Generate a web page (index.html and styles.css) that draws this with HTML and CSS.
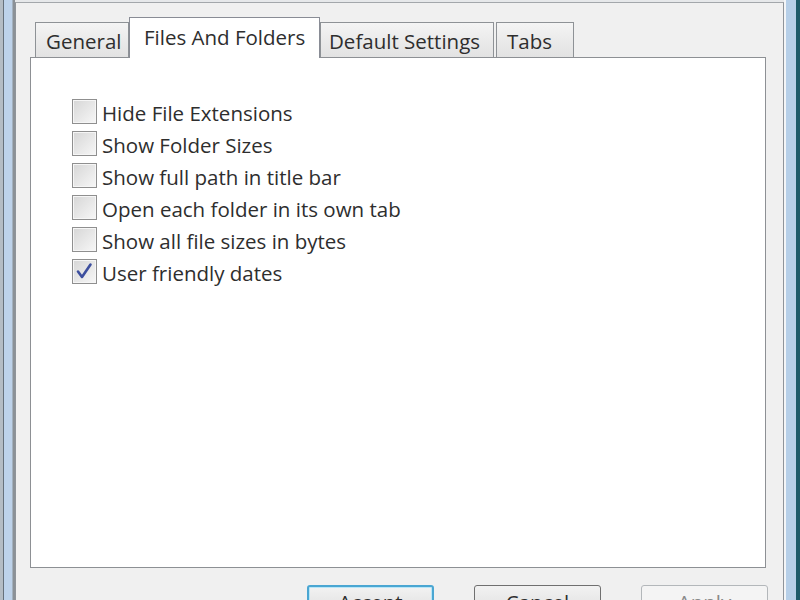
FILE: index.html
```html
<!DOCTYPE html>
<html lang="en">
<head>
    <meta charset="UTF-8">
    <title>Options</title>
    <link rel="stylesheet" href="styles.css">
</head>
<body>
    <div class="screen">
        <div class="frame-left"></div>
        <div class="dialog">
            <div class="tabs">
                <div class="tab tab-general">General</div>
                <div class="tab tab-files active">Files And Folders</div>
                <div class="tab tab-defaults">Default Settings</div>
                <div class="tab tab-tabs">Tabs</div>
            </div>
            <div class="panel">
                <ul class="options">
                    <li><span class="box"></span><span class="label">Hide File Extensions</span></li>
                    <li><span class="box"></span><span class="label">Show Folder Sizes</span></li>
                    <li><span class="box"></span><span class="label">Show full path in title bar</span></li>
                    <li><span class="box"></span><span class="label">Open each folder in its own tab</span></li>
                    <li><span class="box"></span><span class="label">Show all file sizes in bytes</span></li>
                    <li>
                        <span class="box checked">
                            <svg width="23" height="23" viewBox="0 0 23 23">
                                <path d="M5 11.5 L9 17 L17.5 4.5" fill="none" stroke="#3d4f9e" stroke-width="2.6" stroke-linecap="round" stroke-linejoin="round"/>
                            </svg>
                        </span>
                        <span class="label">User friendly dates</span>
                    </li>
                </ul>
            </div>
            <div class="buttons">
                <button class="btn default">Accept</button>
                <button class="btn">Cancel</button>
                <button class="btn" disabled>Apply</button>
            </div>
        </div>
        <div class="frame-right"></div>
    </div>
</body>
</html>
```

FILE: styles.css
```css
body {
    margin: 0;
    background: #e6e8ea;
    font-family: "Open Sans", sans-serif;
    font-size: 20.5px;
    color: #2e2e2e;
    overflow: hidden;
}
.screen {
    display: flex;
    height: 600px;
    overflow: hidden;
}
.frame-left {
    width: 15px;
    flex-shrink: 0;
    background: linear-gradient(to right, #b4bcc4 0 3px, #66707a 3px 4px, #bdd2ea 4px 12px, #a3b1bf 12px 13px, #8b9197 13px 15px);
}
.frame-right {
    width: 16px;
    flex-shrink: 0;
    background: linear-gradient(to right, #f3f5f7 0 2px, #b6cfe8 2px 12px, #1d5a69 12px);
}
.dialog {
    flex: 1;
    margin-top: 2px;
    border-top: 1px solid #a3a7ab;
    border-left: 1px solid #8f949a;
    border-right: 1px solid #8f949a;
    background: #f0f0f0;
    display: flex;
    flex-direction: column;
}
.tabs {
    display: flex;
    flex-shrink: 0;
    align-items: flex-end;
    height: 40px;
    margin: 14px 0 0 19px;
}
.tab {
    box-sizing: border-box;
    height: 35px;
    padding: 4px 0 0 10px;
    line-height: 28px;
    border: 1px solid #8e9296;
    border-bottom: none;
    background: linear-gradient(#f4f4f4, #e2e2e2);
    white-space: nowrap;
}
.tab.active {
    position: relative;
    z-index: 1;
    height: 41px;
    margin-bottom: -1px;
    padding: 5px 0 0 14px;
    background: #fff;
    border-color: #898c95;
}
.tab-general { width: 94px; }
.tab-files { width: 191px; }
.tab-defaults { width: 174px; padding-left: 8px; }
.tab-tabs { width: 78px; margin-left: 2px; }
.panel {
    box-sizing: border-box;
    flex-shrink: 0;
    height: 511px;
    margin: 0 17px 0 14px;
    padding: 37px 0 0 41px;
    border: 1px solid #8d9094;
    background: #fff;
}
.options {
    list-style: none;
    margin: 0;
    padding: 0;
}
.options li {
    display: flex;
    align-items: center;
    gap: 5px;
    height: 32px;
}
.label {
    padding-top: 4px;
}
.box {
    box-sizing: border-box;
    width: 25px;
    height: 25px;
    flex-shrink: 0;
    border: 1px solid #8f8f8f;
    background: linear-gradient(135deg, #d6d6d6, #f7f7f7);
    box-shadow: inset 0 0 0 1px #f6f6f6;
}
.box svg {
    display: block;
}
.buttons {
    display: flex;
    flex-shrink: 0;
    justify-content: flex-end;
    gap: 40px;
    margin: 17px 15px 0 0;
}
.btn {
    box-sizing: border-box;
    width: 127px;
    height: 34px;
    font-family: "Open Sans", sans-serif;
    font-size: 20.5px;
    color: #2e2e2e;
    border: 1px solid #707070;
    border-radius: 3px;
    background: linear-gradient(#f2f2f2, #dcdcdc);
    padding: 0;
}
.btn.default {
    border: 2px solid #4aa6d2;
    box-shadow: inset 0 0 0 1px #b8e6f8;
}
.btn:disabled {
    border-color: #b3b7ba;
    background: #f4f4f4;
    color: #8a8a8a;
}
```
